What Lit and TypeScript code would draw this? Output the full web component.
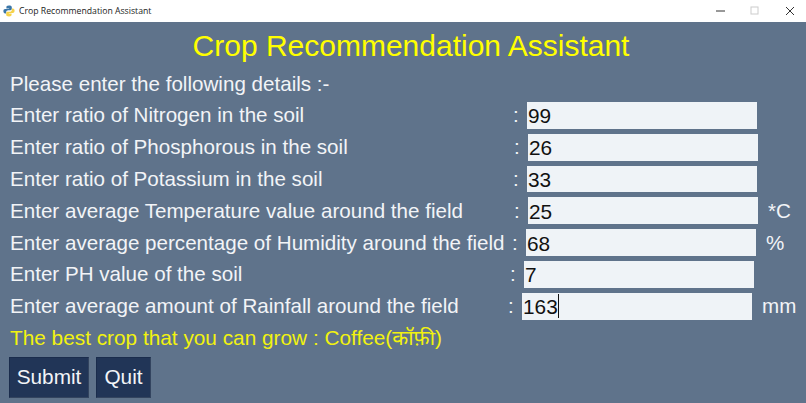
import { LitElement, html, css } from "lit";
import { customElement } from "lit/decorators.js";

const ROWS = [
  { label: "Enter ratio of Nitrogen in the soil", value: "99", colon: 505, unit: "" },
  { label: "Enter ratio of Phosphorous in the soil", value: "26", colon: 506, unit: "" },
  { label: "Enter ratio of Potassium in the soil", value: "33", colon: 505, unit: "" },
  { label: "Enter average Temperature value around the field", value: "25", colon: 506, unit: "*C" },
  { label: "Enter average percentage of Humidity around the field", value: "68", colon: 504, unit: "%" },
  { label: "Enter PH value of the soil", value: "7", colon: 502, unit: "" },
  { label: "Enter average amount of Rainfall around the field", value: "163", colon: 500, unit: "mm", caret: true },
];

@customElement("app-root")
export class AppRoot extends LitElement {
  static styles = css`
    :host {
      display: block;
      width: 806px;
      height: 403px;
      overflow: hidden;
      font-family: "Liberation Sans", Arial, sans-serif;
      background: #5f738b;
    }
    .titlebar {
      height: 22px;
      background: #fff;
      display: flex;
      align-items: center;
      padding-left: 3px;
      gap: 4px;
      color: #222;
      font-size: 8.7px;
      font-family: "Open Sans", "Liberation Sans", sans-serif;
    }
    .logo { width: 12px; height: 12px; flex: none; }
    .caption { margin-left: auto; margin-right: -1px; display: flex; align-items: center; }
    .caption span { width: 34.5px; height: 22px; display: flex; align-items: center; justify-content: center; }
    .main { padding: 7px 10px 0 10px; }
    h1 {
      margin: 0;
      font-weight: 400;
      font-size: 30px;
      line-height: 34px;
      color: #ffff00;
      text-align: center;
      padding-left: 16px;
    }
    .text {
      font-size: 20.6px;
      line-height: 24px;
      color: #f2f4f7;
      white-space: nowrap;
    }
    .intro { margin-top: 9px; height: 24px; }
    .rows { display: flex; flex-direction: column; gap: 5px; margin-top: 6px; }
    .row { display: flex; align-items: center; height: 26.8px; }
    .label { flex: none; white-space: nowrap; }
    .colon { flex: none; width: 14px; }
    .input {
      flex: none;
      box-sizing: border-box;
      width: 230px;
      height: 26.8px;
      background: #eff3f7;
      color: #111;
      font-size: 20.8px;
      line-height: 26px;
      padding: 2px 0 0 1px;
      display: flex;
      align-items: center;
    }
    .caret { width: 1px; height: 24px; background: #111; margin-top: -2px; }
    .unit { margin-left: 10px; }
    .result {
      margin-top: 5px;
      font-size: 20.8px;
      line-height: 26px;
      color: #f2f20f;
      white-space: nowrap;
      font-family: "Liberation Sans", "Noto Sans", "DejaVu Sans", sans-serif;
    }
    .buttons { display: flex; gap: 7px; margin-top: 6px; margin-left: -1px; }
    button {
      height: 41px;
      padding: 0;
      border: 1px solid #1a2c4c;
      border-right-color: #33445f;
      border-bottom-color: #33445f;
      background: #213557;
      color: #f2f4f7;
      font: 400 20.8px "Liberation Sans", Arial, sans-serif;
    }
    .submit { width: 80px; }
    .quit { width: 55px; }
  `;

  render() {
    return html`
      <div class="titlebar">
        <svg class="logo" viewBox="0 0 12 12">
          <path d="M6 .5C3.6.5 3.4 1.5 3.4 2.4v1.2h2.8v.5H2.2C1 4.1.4 5 .4 6.2s.6 2.2 1.8 2.2h1V7c0-1 .9-1.8 2-1.8h2.2c.9 0 1.4-.6 1.4-1.4V2.2C8.8 1.2 7.9.5 6 .5z" fill="#3b76a8"/>
          <path d="M6 11.5c2.4 0 2.6-1 2.6-1.9V8.4H5.8v-.5h4c1.2 0 1.8-.9 1.8-2.1s-.6-2.2-1.8-2.2h-1V5c0 1-.9 1.8-2 1.8H4.6c-.9 0-1.4.6-1.4 1.4v1.6c0 1 .9 1.7 2.8 1.7z" fill="#f6d24a"/>
        </svg>
        <span>Crop Recommendation Assistant</span>
        <div class="caption">
          <span><svg width="10" height="10" viewBox="0 0 10 10"><path d="M0 5h9" stroke="#333" stroke-width="1"/></svg></span>
          <span><svg width="10" height="10" viewBox="0 0 10 10"><rect x="1" y="1" width="7" height="7" fill="none" stroke="#ccc"/></svg></span>
          <span><svg width="10" height="10" viewBox="0 0 10 10"><path d="M1 1l8 8M9 1l-8 8" stroke="#333" stroke-width="1"/></svg></span>
        </div>
      </div>
      <div class="main">
        <h1>Crop Recommendation Assistant</h1>
        <div class="text intro">Please enter the following details :-</div>
        <div class="rows">
          ${ROWS.map(
            (r) => html`
              <div class="row text">
                <span class="label" style="width:${r.colon - 2}px">${r.label}</span>
                <span class="colon">:</span>
                <div class="input">${r.value}${r.caret ? html`<span class="caret"></span>` : ""}</div>
                ${r.unit ? html`<span class="unit">${r.unit}</span>` : ""}
              </div>
            `
          )}
        </div>
        <div class="result">The best crop that you can grow : Coffee(कॉफ़ी)</div>
        <div class="buttons">
          <button class="submit">Submit</button>
          <button class="quit">Quit</button>
        </div>
      </div>
    `;
  }
}
